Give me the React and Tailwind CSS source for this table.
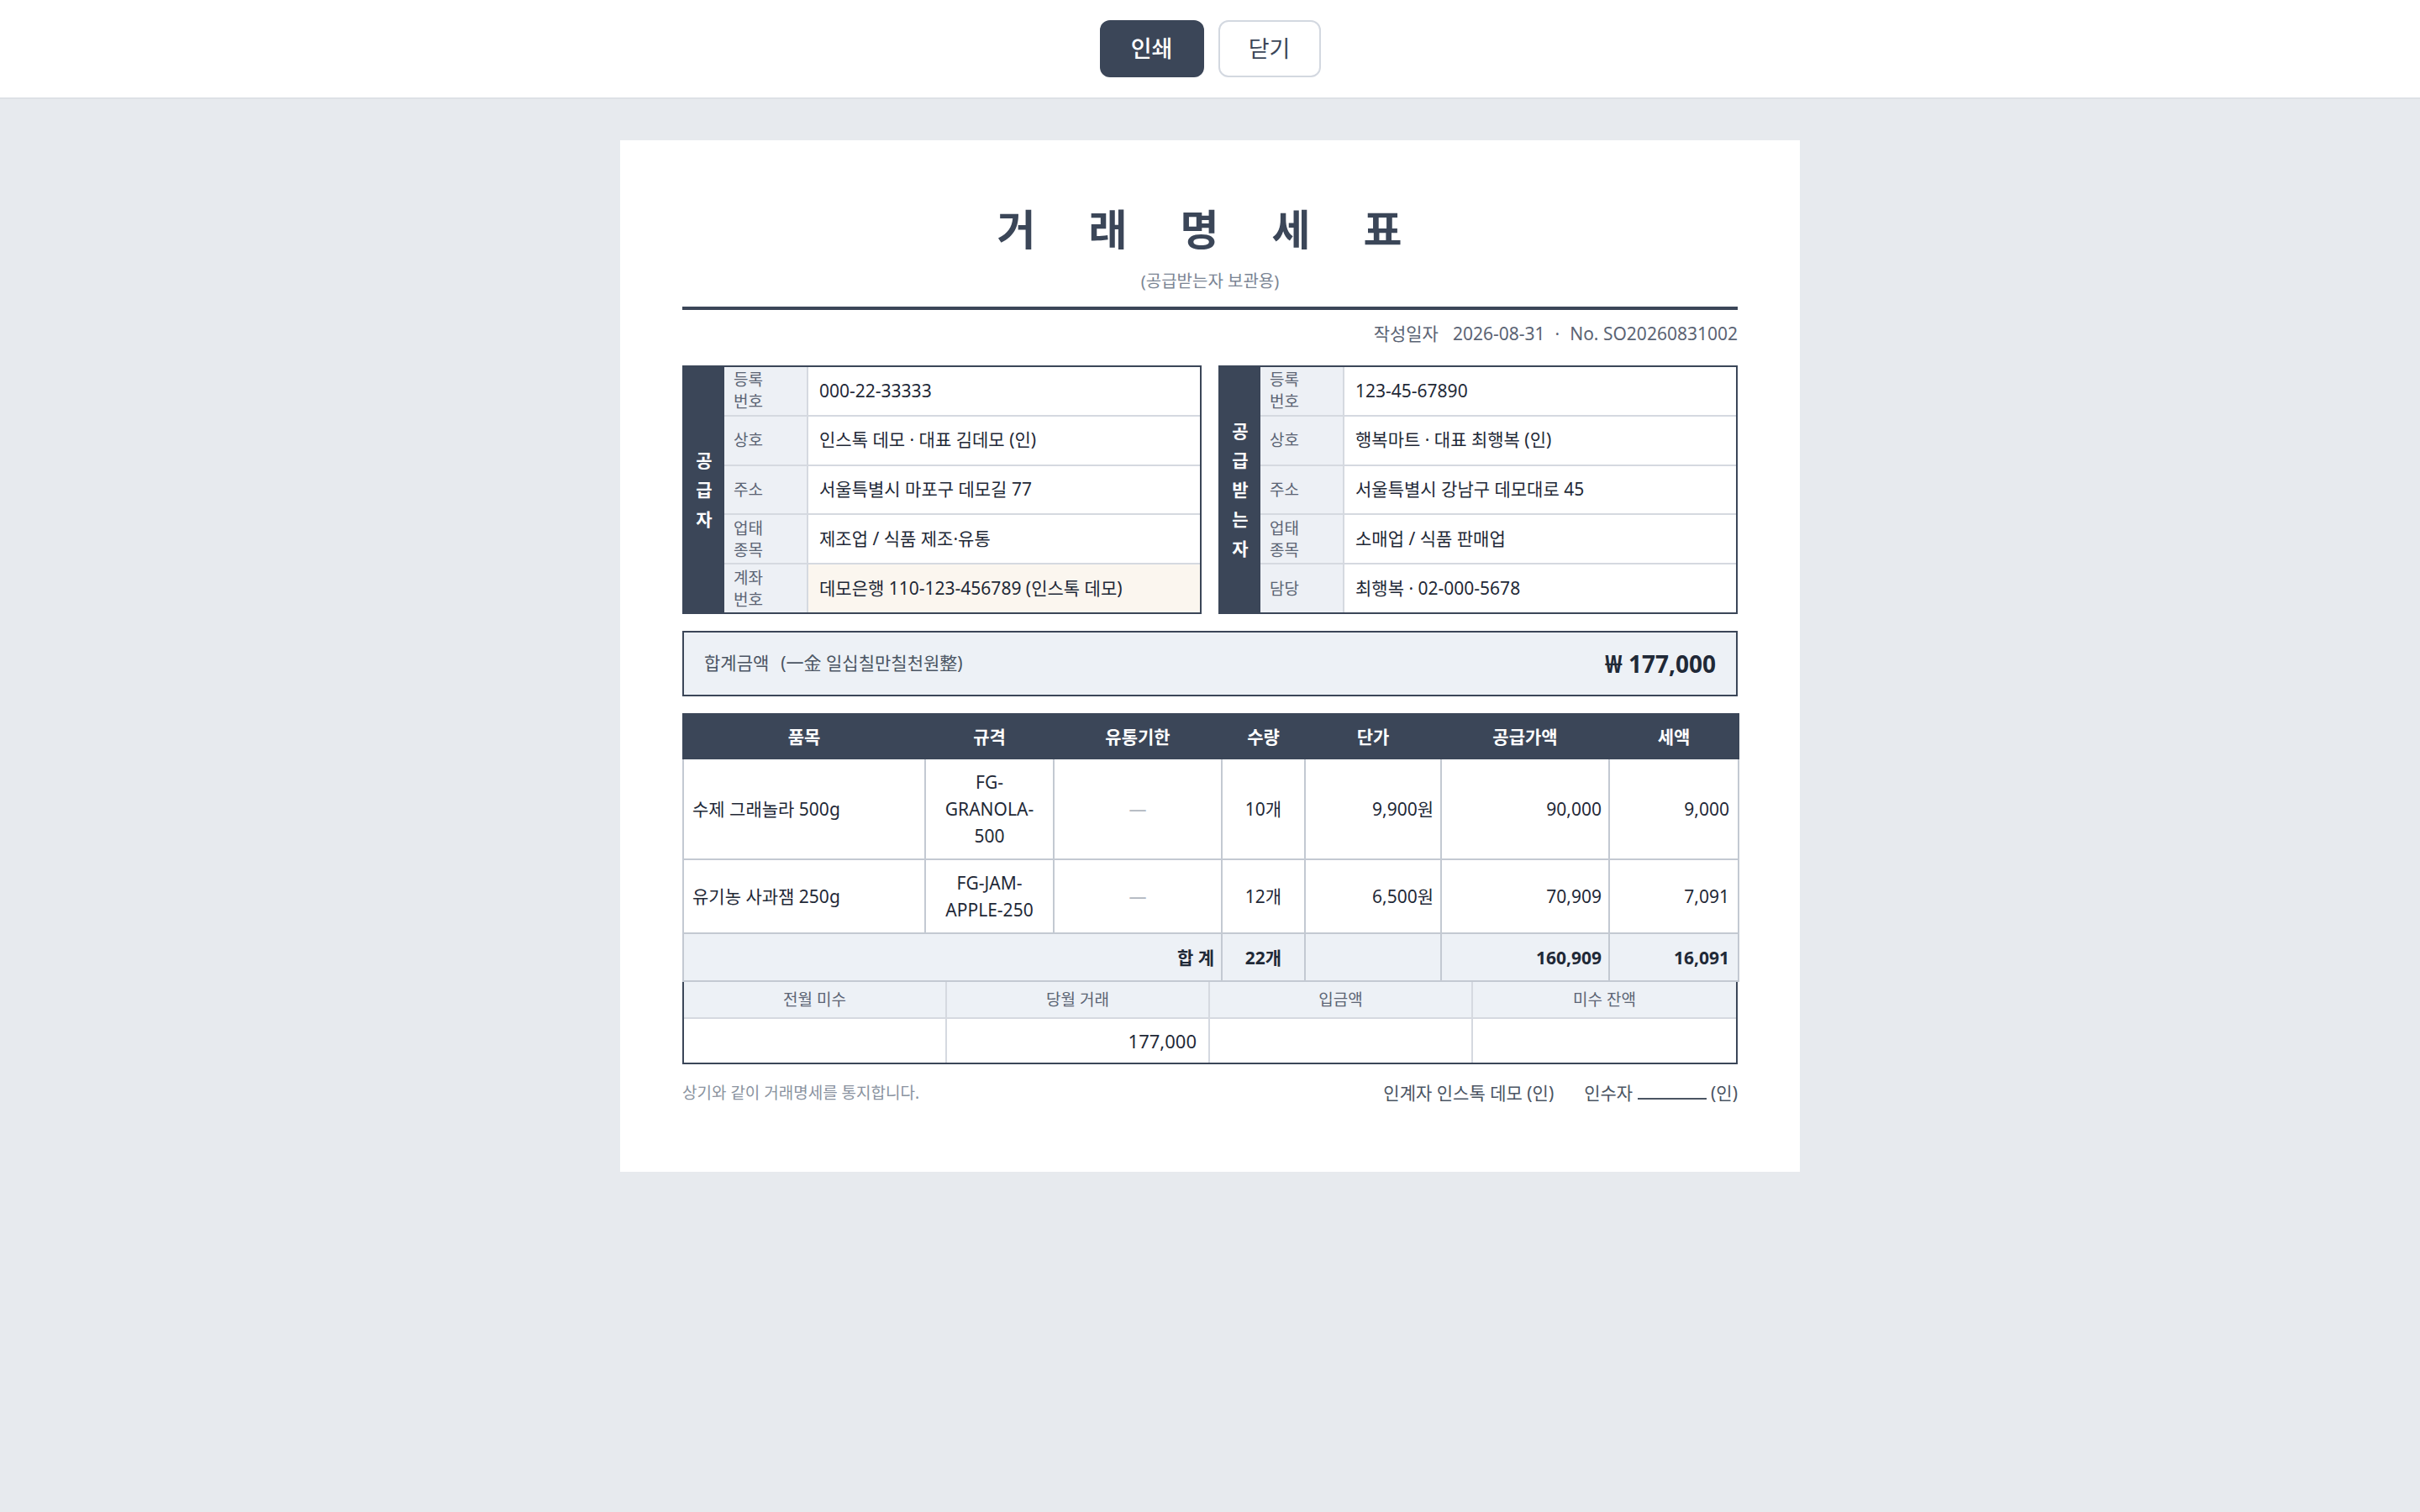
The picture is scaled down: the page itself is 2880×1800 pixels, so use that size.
import React from 'react';

const supplier = [
  { label: ['등록', '번호'], value: '000-22-33333' },
  { label: ['상호'], value: '인스톡 데모 · 대표 김데모 (인)' },
  { label: ['주소'], value: '서울특별시 마포구 데모길 77' },
  { label: ['업태', '종목'], value: '제조업 / 식품 제조·유통' },
  { label: ['계좌', '번호'], value: '데모은행 110-123-456789 (인스톡 데모)', highlight: true }
];

const buyer = [
  { label: ['등록', '번호'], value: '123-45-67890' },
  { label: ['상호'], value: '행복마트 · 대표 최행복 (인)' },
  { label: ['주소'], value: '서울특별시 강남구 데모대로 45' },
  { label: ['업태', '종목'], value: '소매업 / 식품 판매업' },
  { label: ['담당'], value: '최행복 · 02-000-5678' }
];

const items = [
  { name: '수제 그래놀라 500g', spec: ['FG-', 'GRANOLA-', '500'], qty: '10개', price: '9,900원', supply: '90,000', tax: '9,000' },
  { name: '유기농 사과잼 250g', spec: ['FG-JAM-', 'APPLE-250'], qty: '12개', price: '6,500원', supply: '70,909', tax: '7,091' }
];

function PartyBox({ title, rows }) {
  return (
    <div className="flex h-[296px] border-2 border-[#3b4658]">
      <div className="w-[48px] bg-[#3b4658] flex flex-col items-center justify-center text-white font-bold text-[21px] leading-[35px]">
        {title.map((ch) => (
          <span key={ch}>{ch}</span>
        ))}
      </div>
      <div className="flex-1 flex flex-col">
        {rows.map((row, i) => (
          <div
            key={row.value}
            className={`flex flex-1 ${i < rows.length - 1 ? 'border-b-2 border-[#d5d9e0]' : ''}`}
          >
            <div className="w-[100px] shrink-0 bg-[#edf0f5] border-r-2 border-[#d5d9e0] px-[11px] flex flex-col justify-center text-[19px] leading-[26px] text-[#5b6474]">
              {row.label.map((l) => (
                <span key={l}>{l}</span>
              ))}
            </div>
            <div
              className={`flex-1 flex items-center px-[13px] text-[21px] text-[#1f2937] ${row.highlight ? 'bg-[#fbf6ef]' : 'bg-white'}`}
            >
              {row.value}
            </div>
          </div>
        ))}
      </div>
    </div>
  );
}

export default function App() {
  return (
    <div className="min-h-screen bg-[#e7eaee] font-['Noto_Sans','Noto_Sans_CJK_KR',sans-serif]">
      <header className="h-[118px] bg-white border-b-2 border-[#dde1e6] flex items-center justify-center gap-[17px]">
        <button className="w-[124px] h-[68px] rounded-[12px] bg-[#3b4658] text-white text-[27px] font-medium">
          인쇄
        </button>
        <button className="w-[122px] h-[68px] rounded-[12px] border-2 border-[#d3d8e0] bg-white text-[#3b4658] text-[27px]">
          닫기
        </button>
      </header>

      <div className="mt-[49px] mx-auto w-[1404px] bg-white px-[74px] pt-[76px] pb-[80px]">
        <div className="text-center border-b-4 border-[#3b4658] pb-[16px]">
          <h1 className="text-[50px] leading-[60px] font-bold text-[#3b4658] tracking-[0.5em]">
            거 래 명 세 표
          </h1>
          <p className="mt-[18px] text-[20px] leading-[28px] text-[#7b8594]">(공급받는자 보관용)</p>
        </div>

        <div className="mt-[14px] text-right text-[21px] leading-[28px] text-[#5b6474]">
          <span>작성일자</span>
          <span className="ml-[17px]">2026-08-31</span>
          <span className="mx-[12px]">·</span>
          <span>No. SO20260831002</span>
        </div>

        <div className="mt-[24px] grid grid-cols-2 gap-[20px]">
          <PartyBox title={['공', '급', '자']} rows={supplier} />
          <PartyBox title={['공', '급', '받', '는', '자']} rows={buyer} />
        </div>

        <div className="mt-[20px] h-[78px] border-2 border-[#3b4658] bg-[#edf1f6] flex items-center justify-between px-[24px]">
          <div className="text-[21px] text-[#4b5563]">
            <span>합계금액</span>
            <span className="ml-[14px]">(一金 일십칠만칠천원整)</span>
          </div>
          <div className="text-[28px] font-bold text-[#1f2937]">₩ 177,000</div>
        </div>

        <table className="mt-[20px] w-full table-fixed border-collapse text-[21px] leading-[32px] text-[#1f2937]">
          <colgroup>
            <col className="w-[288px]" />
            <col className="w-[153px]" />
            <col className="w-[200px]" />
            <col className="w-[99px]" />
            <col className="w-[162px]" />
            <col className="w-[200px]" />
            <col className="w-[154px]" />
          </colgroup>
          <thead>
            <tr className="bg-[#3b4658] text-white h-[53px]">
              {['품목', '규격', '유통기한', '수량', '단가', '공급가액', '세액'].map((h) => (
                <th key={h} className="font-bold text-center border-2 border-[#3b4658]">
                  {h}
                </th>
              ))}
            </tr>
          </thead>
          <tbody>
            {items.map((it) => (
              <tr key={it.name}>
                <td className="border-2 border-[#c3c9d2] px-[10px] py-[11px]">{it.name}</td>
                <td className="border-2 border-[#c3c9d2] px-[6px] py-[11px] text-center">
                  {it.spec.map((s) => (
                    <div key={s}>{s}</div>
                  ))}
                </td>
                <td className="border-2 border-[#c3c9d2] text-center text-[#b0b6c0]">—</td>
                <td className="border-2 border-[#c3c9d2] text-center">{it.qty}</td>
                <td className="border-2 border-[#c3c9d2] text-right px-[8px]">{it.price}</td>
                <td className="border-2 border-[#c3c9d2] text-right px-[8px]">{it.supply}</td>
                <td className="border-2 border-[#c3c9d2] text-right px-[10px]">{it.tax}</td>
              </tr>
            ))}
            <tr className="bg-[#edf1f6] h-[57px] font-bold">
              <td colSpan={3} className="border-2 border-[#c3c9d2] text-right px-[8px]">합 계</td>
              <td className="border-2 border-[#c3c9d2] text-center">22개</td>
              <td className="border-2 border-[#c3c9d2]"></td>
              <td className="border-2 border-[#c3c9d2] text-right px-[8px]">160,909</td>
              <td className="border-2 border-[#c3c9d2] text-right px-[10px]">16,091</td>
            </tr>
          </tbody>
        </table>

        <div className="border-x-2 border-b-2 border-[#3b4658]">
          <div className="grid grid-cols-4 h-[44px] bg-[#edf1f6] border-b-2 border-[#d5d9e0] text-[19px] text-[#5b6474]">
            {['전월 미수', '당월 거래', '입금액', '미수 잔액'].map((h, i) => (
              <div
                key={h}
                className={`flex items-center justify-center ${i < 3 ? 'border-r-2 border-[#d5d9e0]' : ''}`}
              >
                {h}
              </div>
            ))}
          </div>
          <div className="grid grid-cols-4 h-[52px] text-[22px] text-[#1f2937]">
            <div className="border-r-2 border-[#d5d9e0]"></div>
            <div className="border-r-2 border-[#d5d9e0] flex items-center justify-end px-[14px]">177,000</div>
            <div className="border-r-2 border-[#d5d9e0]"></div>
            <div></div>
          </div>
        </div>

        <div className="mt-[20px] flex items-center justify-between leading-[28px]">
          <p className="text-[19px] text-[#8a93a0]">상기와 같이 거래명세를 통지합니다.</p>
          <div className="text-[21px] text-[#4b5563] flex items-center gap-[36px]">
            <span>인계자 인스톡 데모 (인)</span>
            <span>
              인수자 <span className="inline-block w-[82px] border-b-2 border-[#4b5563] align-baseline"></span> (인)
            </span>
          </div>
        </div>
      </div>
    </div>
  );
}
